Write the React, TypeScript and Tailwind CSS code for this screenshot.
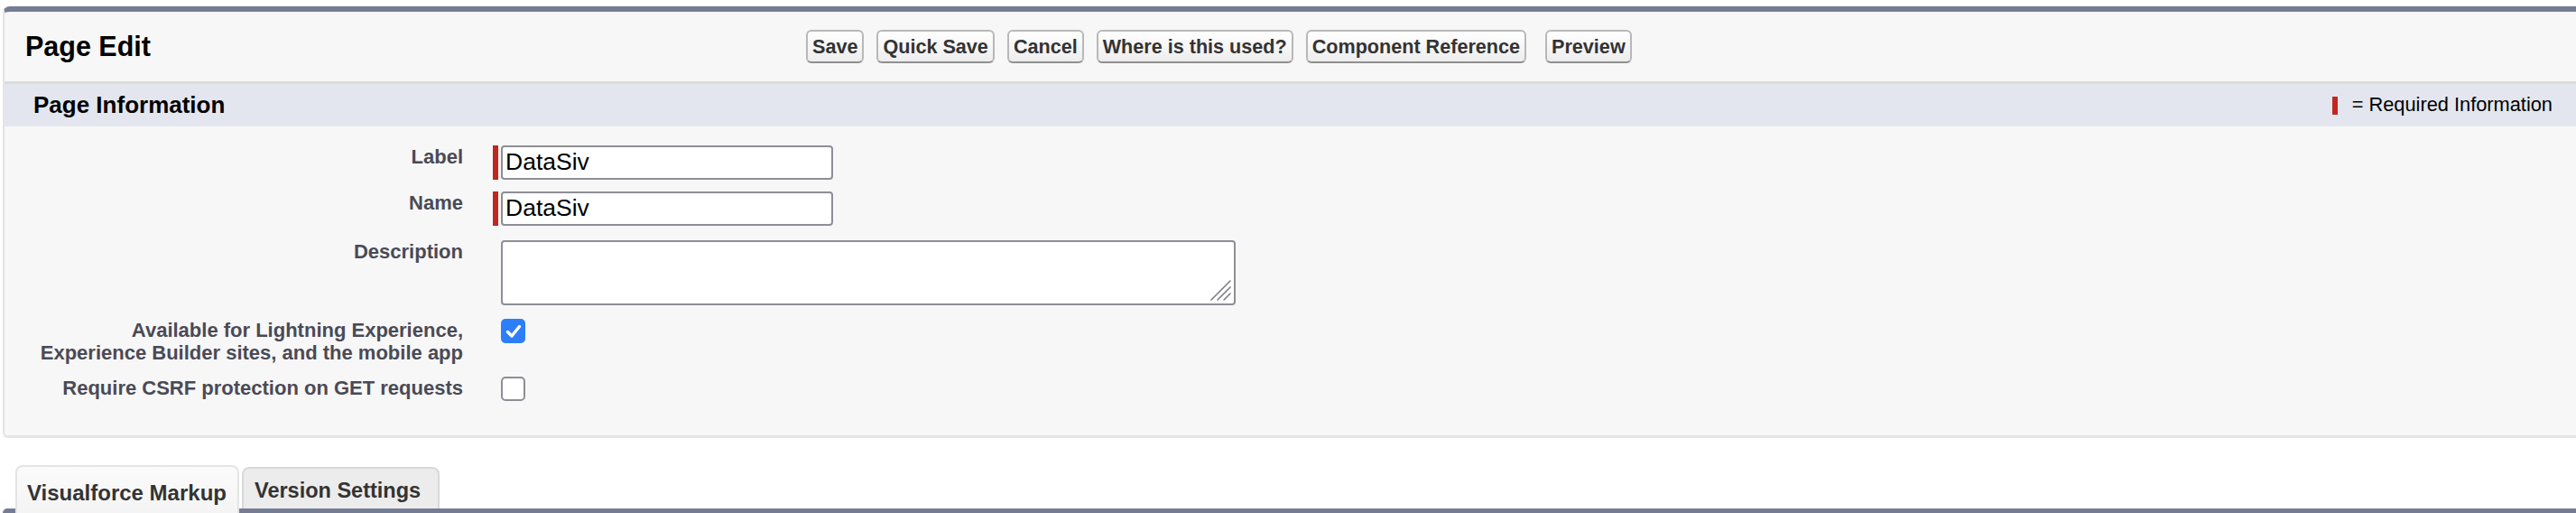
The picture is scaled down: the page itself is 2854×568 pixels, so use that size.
const font = { fontFamily: '"Liberation Sans", Arial, Helvetica, sans-serif' };

const buttons = ['Save', 'Quick Save', 'Cancel', 'Where is this used?', 'Component Reference'];

function Btn({ label, className = '' }: { label: string; className?: string }) {
  return (
    <button
      type="button"
      className={`h-[37px] rounded-[6px] border-2 border-[#b8b8b8] border-b-[#8f8f8f] bg-gradient-to-b from-white to-[#ededed] px-[5px] text-[21.6px] font-bold leading-none text-[#333] ${className}`}
    >
      {label}
    </button>
  );
}

function Label({ children }: { children: React.ReactNode }) {
  return (
    <div className="w-[508px] shrink-0 text-right text-[22px] font-bold leading-[25px] text-[#4a4a56]">
      {children}
    </div>
  );
}

function RequiredInput({ value }: { value: string }) {
  return (
    <div className="ml-[33px] flex h-[38px] items-stretch">
      <div className="w-[6px] bg-[#c0271e]" />
      <input
        readOnly
        value={value}
        className="ml-[3px] h-[38px] w-[368px] rounded-[4px] border-2 border-[#8e8e96] bg-white px-[3px] text-[26.5px] text-black outline-none"
        style={font}
      />
    </div>
  );
}

function CheckBox({ checked }: { checked?: boolean }) {
  if (checked) {
    return (
      <span className="ml-[42px] flex h-[27px] w-[27px] items-center justify-center rounded-[5px] bg-[#2d7ff9]">
        <svg width="18" height="16" viewBox="0 0 18 16">
          <path d="M2.5 8.5 L7 13 L15.5 2.5" fill="none" stroke="white" strokeWidth="3.4" strokeLinecap="round" strokeLinejoin="round" />
        </svg>
      </span>
    );
  }
  return <span className="ml-[42px] block h-[27px] w-[27px] rounded-[5px] border-2 border-[#8e8e96] bg-white" />;
}

export default function App() {
  return (
    <div className="w-[2854px] overflow-hidden bg-white pt-[7px]" style={font}>
      {/* page block */}
      <div className="ml-[3px] rounded-tl-[8px] rounded-bl-[6px] border-t-[6px] border-l-2 border-b-[3px] border-t-[#757d94] border-l-[#e4e4e4] border-b-[#e6e6e6] bg-[#f7f7f7]">
        <div className="flex h-[80px] items-center border-b-[3px] border-[#dcdcdc]">
          <h2 className="w-[888px] shrink-0 pl-[23px] text-[30.5px] font-bold text-black">Page Edit</h2>
          <div className="flex items-center gap-[14px]">
            {buttons.map((b) => (
              <Btn key={b} label={b} />
            ))}
            <Btn label="Preview" className="ml-[7px]" />
          </div>
        </div>

        <div className="flex h-[47px] items-center justify-between bg-[#e3e6ee] pl-[32px] pr-[26px]">
          <h3 className="text-[26px] font-bold text-black">Page Information</h3>
          <div className="flex items-center">
            <span className="block h-[20px] w-[6px] bg-[#c0271e]" />
            <span className="ml-[16px] text-[21.8px] text-black">= Required Information</span>
          </div>
        </div>

        <div className="flex flex-col pt-[21px] pb-[38px]">
          <div className="flex items-start">
            <Label>Label</Label>
            <RequiredInput value="DataSiv" />
          </div>
          <div className="mt-[13px] flex items-start">
            <Label>Name</Label>
            <RequiredInput value="DataSiv" />
          </div>
          <div className="mt-[16px] flex items-start">
            <Label>Description</Label>
            <div className="relative ml-[42px] h-[72px] w-[814px]">
              <textarea
                readOnly
                className="h-full w-full resize-none rounded-[4px] border-2 border-[#8e8e96] bg-white outline-none"
              />
              <svg className="absolute right-[5px] bottom-[5px]" width="24" height="24" viewBox="0 0 24 24">
                <g stroke="#7a7a80" strokeWidth="1.6" strokeLinecap="round">
                  <line x1="2" y1="23" x2="23" y2="2" />
                  <line x1="9" y1="23" x2="23" y2="9" />
                  <line x1="16" y1="23" x2="23" y2="16" />
                </g>
              </svg>
            </div>
          </div>
          <div className="mt-[15px] flex items-start">
            <Label>
              Available for Lightning Experience,
              <br />
              Experience Builder sites, and the mobile app
            </Label>
            <CheckBox checked />
          </div>
          <div className="mt-[14px] flex items-start">
            <Label>Require CSRF protection on GET requests</Label>
            <CheckBox />
          </div>
        </div>
      </div>

      {/* tabs */}
      <div className="mt-[30px]">
        <div className="flex items-end pl-[17px]">
          <div className="relative z-10 -mb-[5px] flex h-[53px] w-[248px] items-start rounded-t-[8px] border-2 border-b-0 border-[#e4e4e4] bg-gradient-to-b from-[#fbfbfb] to-[#f4f4f4] pl-[11px] pt-[11px]">
            <span className="text-[24px] font-bold text-[#333]">Visualforce Markup</span>
          </div>
          <div className="ml-[3px] flex h-[46px] w-[219px] items-start rounded-t-[8px] border-2 border-b-0 border-[#d9d9d9] bg-[#ececec] pl-[12px] pt-[7px]">
            <span className="text-[23.5px] font-bold text-[#333]">Version Settings</span>
          </div>
        </div>
        <div className="ml-[3px] h-[5px] rounded-tl-[6px] bg-[#757d94]" />
      </div>
    </div>
  );
}
